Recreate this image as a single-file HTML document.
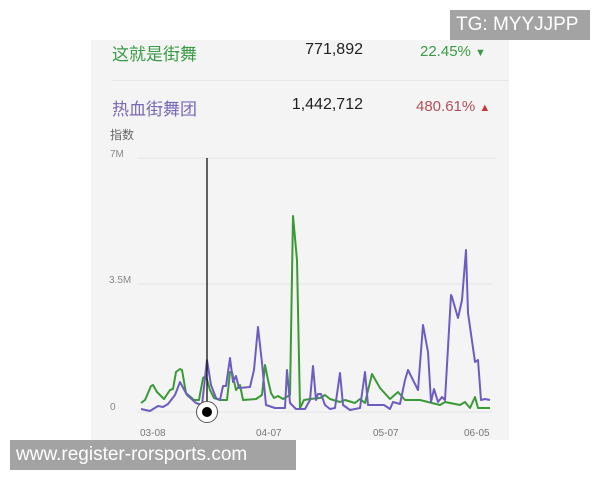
<!DOCTYPE html>
<html><head><meta charset="utf-8"><style>
body{margin:0;width:600px;height:480px;background:#fff;position:relative;overflow:hidden;font-family:"Liberation Sans","Noto Sans CJK SC",sans-serif}
.panel{position:absolute;left:91px;top:40px;width:418px;height:400px;background:#f4f4f4}
.t{position:absolute;white-space:nowrap}
.r{position:absolute;white-space:nowrap;text-align:right}
.tg{position:absolute;left:450px;top:10px;width:140px;height:30px;background:#a3a3a3;color:#fff;font-size:19px;line-height:30px;padding-left:6px;box-sizing:border-box}
.ww{position:absolute;left:10px;top:440px;width:286px;height:30px;background:#a3a3a3;color:#fff;font-size:19px;line-height:29px;padding-left:6px;box-sizing:border-box}
</style></head><body>
<div class="panel"></div>
<div class="t" style="left:112px;top:40px;font-size:17px;color:#3a9a45">这就是街舞</div>
<div class="r" style="right:237px;top:41px;font-size:16px;color:#222">771,892</div>
<div class="t" style="left:420px;top:43px;font-size:15px;color:#3a9a45">22.45% <span style="font-size:11px">▼</span></div>
<div style="position:absolute;left:112px;top:80px;width:397px;height:1px;background:#e6e6e6"></div>
<div class="t" style="left:112px;top:95px;font-size:17px;color:#7a68b8">热血街舞团</div>
<div class="r" style="right:237px;top:96px;font-size:16px;color:#222">1,442,712</div>
<div class="t" style="left:416px;top:98px;font-size:15px;color:#b0505a">480.61% <span style="font-size:11px;color:#c33">▲</span></div>
<div class="t" style="left:110px;top:126px;font-size:12px;color:#666">指数</div>
<div class="t" style="left:110px;top:149px;font-size:10px;color:#888">7M</div>
<div class="t" style="left:109px;top:275px;font-size:10px;color:#888">3.5M</div>
<div class="t" style="left:110px;top:402px;font-size:10px;color:#888">0</div>
<div class="t" style="left:140px;top:428px;font-size:10px;color:#777">03-08</div>
<div class="t" style="left:256px;top:428px;font-size:10px;color:#777">04-07</div>
<div class="t" style="left:373px;top:428px;font-size:10px;color:#777">05-07</div>
<div class="t" style="left:464px;top:428px;font-size:10px;color:#777">06-05</div>
<svg style="position:absolute;left:0;top:0" width="600" height="480">
<line x1="137" y1="158" x2="496" y2="158" stroke="#e4e4e4"/>
<line x1="137" y1="284" x2="492" y2="284" stroke="#e4e4e4"/>
<line x1="137" y1="412" x2="492" y2="412" stroke="#e4e4e4"/>
<polyline fill="none" stroke="#3a9a35" stroke-width="2" stroke-linejoin="round" points="141,403 145,400 151,386 153,385 157,392 164,399 170,390 173,389 176,372 180,369 182,370 186,393 194,400 199,400 203,378 206,376 210,390 214,398 220,400 227,400 230,372 232,372 236,390 240,385 243,400 256,399 262,395 265,365 268,380 271,393 274,398 278,396 283,399 290,395 293,216 297,260 300,408 304,400 310,399 320,398 325,395 330,399 340,402 345,400 355,403 360,399 365,403 372,374 380,388 390,399 398,392 405,400 420,400 440,405 445,402 460,405 465,402 470,408 475,397 478,408 490,408"/>
<polyline fill="none" stroke="#6f5cc0" stroke-width="2" stroke-linejoin="round" points="141,409 150,411 158,406 163,407 168,404 175,395 180,382 187,395 196,403 202,405 207,360 211,385 216,398 220,400 223,386 226,386 230,358 233,382 236,376 239,388 250,387 254,370 258,327 262,363 266,405 275,408 285,408 287,370 290,403 296,409 305,409 310,400 313,366 316,400 318,394 321,394 325,405 330,409 335,408 340,373 343,405 350,410 360,408 365,372 368,405 375,405 384,405 390,409 393,402 400,404 405,380 408,370 411,376 418,390 423,325 428,352 431,402 434,389 438,402 442,397 445,400 449,330 451,295 452,297 458,318 462,300 466,250 468,313 475,362 478,360 481,400 485,399 490,400"/>
<line x1="207" y1="158" x2="207" y2="410" stroke="#111" stroke-width="1.3"/>
<circle cx="207" cy="412" r="10.5" fill="#fff" stroke="#555" stroke-width="1"/>
<circle cx="207" cy="412" r="5" fill="#000"/>
</svg>
<div class="tg">TG: MYYJJPP</div>
<div class="ww">www.register-rorsports.com</div>
</body></html>
